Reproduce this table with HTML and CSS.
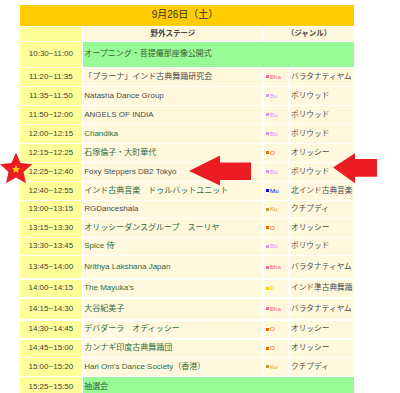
FILE: index.html
```html
<!DOCTYPE html>
<html lang="ja">
<head>
<meta charset="utf-8">
<link rel="stylesheet" href="styles.css">
</head>
<body>
<div class="page">
  <div class="sched">
    <div class="cell head">9月26日（土）</div>

    <div class="cell time"></div>
    <div class="cell sub">野外ステージ</div>
    <div class="cell sub span2">（ジャンル）</div>

    <div class="cell time">10:30~11:00</div>
    <div class="cell event span3">オープニング・菩提僊那座像公開式</div>

    <div class="cell time">11:20~11:35</div>
    <div class="cell name gray">「プラーナ」インド古典舞踊研究会</div>
    <div class="cell tag"><span class="t bha">Bha</span></div>
    <div class="cell genre">バラタナティヤム</div>

    <div class="cell time">11:35~11:50</div>
    <div class="cell name gray">Natasha Dance Group</div>
    <div class="cell tag"><span class="t bo">Bo</span></div>
    <div class="cell genre">ボリウッド</div>

    <div class="cell time">11:50~12:00</div>
    <div class="cell name gray">ANGELS OF INDIA</div>
    <div class="cell tag"><span class="t bo">Bo</span></div>
    <div class="cell genre">ボリウッド</div>

    <div class="cell time">12:00~12:15</div>
    <div class="cell name link">Chandika</div>
    <div class="cell tag"><span class="t bo">Bo</span></div>
    <div class="cell genre">ボリウッド</div>

    <div class="cell time">12:15~12:25</div>
    <div class="cell name link">石塚倫子・大町華代</div>
    <div class="cell tag"><span class="t o">O</span></div>
    <div class="cell genre">オリッシー</div>

    <div class="cell time">12:25~12:40</div>
    <div class="cell name gray">Foxy Steppers DB2 Tokyo</div>
    <div class="cell tag"><span class="t bo">Bo</span></div>
    <div class="cell genre">ボリウッド</div>

    <div class="cell time">12:40~12:55</div>
    <div class="cell name link">インド古典音楽　ドゥルバットユニット</div>
    <div class="cell tag"><span class="t mu">Mu</span></div>
    <div class="cell genre">北インド古典音楽</div>

    <div class="cell time">13:00~13:15</div>
    <div class="cell name gray">RGDanceshala</div>
    <div class="cell tag"><span class="t ku">Ku</span></div>
    <div class="cell genre">クチプディ</div>

    <div class="cell time">13:15~13:30</div>
    <div class="cell name link">オリッシーダンスグループ　スーリヤ</div>
    <div class="cell tag"><span class="t o">O</span></div>
    <div class="cell genre">オリッシー</div>

    <div class="cell time">13:30~13:45</div>
    <div class="cell name link">Spice 侍</div>
    <div class="cell tag"><span class="t bo">Bo</span></div>
    <div class="cell genre">ボリウッド</div>

    <div class="cell time">13:45~14:00</div>
    <div class="cell name link">Nrithya Lakshana Japan</div>
    <div class="cell tag"><span class="t bha">Bha</span></div>
    <div class="cell genre">バラタナティヤム</div>

    <div class="cell time">14:00~14:15</div>
    <div class="cell name link">The Mayuka's</div>
    <div class="cell tag"><span class="t d">D</span></div>
    <div class="cell genre">インド準古典舞踊</div>

    <div class="cell time">14:15~14:30</div>
    <div class="cell name link">大谷紀美子</div>
    <div class="cell tag"><span class="t bha">Bha</span></div>
    <div class="cell genre">バラタナティヤム</div>

    <div class="cell time">14:30~14:45</div>
    <div class="cell name link">デバダーラ　オディッシー</div>
    <div class="cell tag"><span class="t o">O</span></div>
    <div class="cell genre">オリッシー</div>

    <div class="cell time">14:45~15:00</div>
    <div class="cell name link">カンナギ印度古典舞踊団</div>
    <div class="cell tag"><span class="t o">O</span></div>
    <div class="cell genre">オリッシー</div>

    <div class="cell time">15:00~15:20</div>
    <div class="cell name link">Hari Om's Dance Society（香港）</div>
    <div class="cell tag"><span class="t ku">Ku</span></div>
    <div class="cell genre">クチプディ</div>

    <div class="cell time">15:25~15:50</div>
    <div class="cell event span3">抽選会</div>
  </div>

  <svg class="marks" width="400" height="393" viewBox="0 0 400 393" aria-hidden="true">
    <g transform="translate(16 169.5) scale(1.13)">
      <polygon fill="#ec1c24" points="0,-15 4.11,-5.66 14.27,-4.64 6.66,2.16 8.82,12.14 0,7 -8.82,12.14 -6.66,2.16 -14.27,-4.64 -4.11,-5.66"/>
      <polygon fill="#ffc20e" transform="scale(0.26)" points="0,-15 4.11,-5.66 14.27,-4.64 6.66,2.16 8.82,12.14 0,7 -8.82,12.14 -6.66,2.16 -14.27,-4.64 -4.11,-5.66"/>
    </g>
    <polygon fill="#ec1c24" points="189,171 220,155.5 220,162.5 251,162.5 251,180 220,180 220,185.5"/>
    <polygon fill="#ec1c24" points="333,167.5 355,153.3 355,159 377,159 377,176.7 355,176.7 355,183.3"/>
  </svg>
</div>
</body>
</html>
```

FILE: styles.css
```css
html, body {
  margin: 0;
  padding: 0;
  background: #ffffff;
}

.page {
  position: relative;
  width: 400px;
  height: 393px;
  overflow: hidden;
  font-family: "Liberation Sans", "Noto Sans CJK JP", sans-serif;
}

.sched {
  display: grid;
  grid-template-columns: 61.7px 179.3px 24.5px 64px;
  grid-template-rows: 20.7px 13.5px 24.4px 17.5px 17.5px 17.5px 17.5px 17.5px 17.5px 17.5px 16.5px 17.5px 16.5px 22px 17.5px 20.5px 17.5px 17px 17.5px 20px;
  gap: 1.5px;
  margin: 5px 0 0 20px;
  width: 334px;
  background: #ffffff;
}

.cell {
  display: flex;
  align-items: center;
  font-size: 8px;
  line-height: 1;
  white-space: nowrap;
  overflow: hidden;
  background: #fff8dc;
  color: #4d4d4d;
}

.head {
  grid-column: 1 / span 4;
  justify-content: center;
  background: #ffcc00;
  font-size: 10px;
  color: #333333;
  padding-right: 4px;
}

.time {
  justify-content: center;
  background: #ffff99;
  color: #404040;
}

.sub {
  justify-content: center;
  font-weight: bold;
  font-size: 7.5px;
  color: #444444;
}

.span2 {
  grid-column: span 2;
}

.span3 {
  grid-column: span 3;
}

.event {
  background: #98fb98;
  color: #3a5f3a;
  padding-left: 1px;
}

.name {
  padding-left: 1px;
}

.gray {
  color: #4d4d4d;
}

.link {
  color: #2d6d3d;
}

.tag {
  padding-left: 2px;
}

.genre {
  padding-left: 1px;
  font-size: 7.7px;
  color: #4d4d4d;
}

.t {
  display: inline-flex;
  align-items: center;
  font-size: 6.2px;
}

.t::before {
  content: "";
  display: inline-block;
  width: 3px;
  height: 3px;
  margin-right: 1px;
  background: currentColor;
}

.bha { color: #ff6699; }
.bo { color: #cc99ff; }
.o { color: #ff6600; }
.mu { color: #0000ff; }
.ku { color: #cc9933; }
.d { color: #ffcc00; }

.marks {
  position: absolute;
  left: 0;
  top: 0;
  pointer-events: none;
}
```
